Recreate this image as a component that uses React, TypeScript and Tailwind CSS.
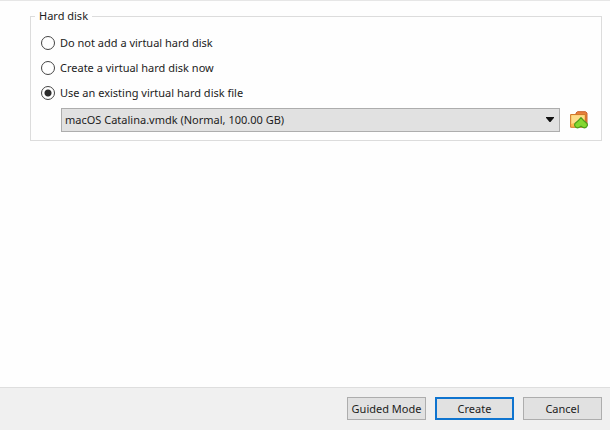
import { useState } from 'react';

type DiskMode = 'none' | 'create' | 'existing';

interface DiskOption {
    value: DiskMode;
    label: string;
}

const diskOptions: DiskOption[] = [
    { value: 'none', label: 'Do not add a virtual hard disk' },
    { value: 'create', label: 'Create a virtual hard disk now' },
    { value: 'existing', label: 'Use an existing virtual hard disk file' },
];

const diskFiles = ['macOS Catalina.vmdk (Normal, 100.00 GB)'];

function FolderUpIcon() {
    return (
        <svg viewBox="0 0 18 18" className="h-[18px] w-[18px]" aria-hidden="true">
            <path d="M6 4V2L7.5 .7h8L17 2v13H6z" fill="#e8803c" stroke="#c9622a" strokeWidth="1" />
            <path d="M.6 3.5h14.9v12.8H.6z" fill="#fbb94f" stroke="#d07a2c" strokeWidth="1" />
            <path d="M1.4 4.3h13v4L1.4 13z" fill="#fddc8a" />
            <path
                d="M11 6.6C12.6 8.6 14.6 10.6 16.7 12.2c1.200 1.300.7 3.400-.8 4.200-1.600.8-3.300.4-4.900-1.200-1.600 1.600-3.300 2-4.900 1.200-1.500-.8-2-2.900-.8-4.200C7.400 10.6 9.400 8.600 11 6.600z"
                fill="#84d830"
                stroke="#4a9e1c"
                strokeWidth="1.2"
                strokeLinejoin="round"
            />
        </svg>
    );
}

export default function App() {
    const [mode, setMode] = useState<DiskMode>('existing');
    const [file, setFile] = useState(diskFiles[0]);

    return (
        <form
            className="flex min-h-screen flex-col border-t border-[#e6e6e6] bg-[#fefefe] font-['Noto_Sans',sans-serif] text-[11px] leading-4 text-[#1c1c1c]"
            onSubmit={(e) => e.preventDefault()}
        >
            <main className="flex-1 pt-[7px] pr-2 pl-[30px]">
                <fieldset className="border border-[#dcdcdc] px-[10px] pb-2">
                    <legend className="-ml-1.5 px-1">Hard disk</legend>

                    <div className="flex flex-col gap-[9px] pt-[11px]">
                        {diskOptions.map((option) => (
                            <label key={option.value} className="flex items-center gap-[5px] self-start">
                                <input
                                    type="radio"
                                    name="disk"
                                    value={option.value}
                                    checked={mode === option.value}
                                    onChange={() => setMode(option.value)}
                                    className="h-[14px] w-[14px] appearance-none rounded-full border border-[#444] bg-white checked:bg-[radial-gradient(circle,#2b2b2b_3px,#fff_4px)]"
                                />
                                {option.label}
                            </label>
                        ))}
                    </div>

                    <div className="mt-[7px] flex items-center gap-[10px] pr-[3px] pl-5">
                        <div className="relative flex-1">
                            <select
                                aria-label="Virtual hard disk file"
                                value={file}
                                onChange={(e) => setFile(e.target.value)}
                                className="block h-6 w-full appearance-none border border-[#adadad] bg-[#e1e1e1] pr-6 pl-[3px]"
                            >
                                {diskFiles.map((name) => (
                                    <option key={name}>{name}</option>
                                ))}
                            </select>
                            <svg viewBox="0 0 8 5" className="pointer-events-none absolute top-[9px] right-[6px] h-[5px] w-2" aria-hidden="true">
                                <path d="M0 0h8v.8L4.5 5h-1L0 .8z" fill="#111" />
                            </svg>
                        </div>
                        <button type="button" aria-label="Choose a virtual hard disk file">
                            <FolderUpIcon />
                        </button>
                    </div>
                </fieldset>
            </main>

            <footer className="flex justify-end gap-[9px] border-t border-[#dedede] bg-[#f0f0f0] pt-[9px] pr-2 pb-[10px]">
                <button type="button" className="h-[23px] w-[79px] border border-[#adadad] bg-[#e1e1e1] whitespace-nowrap">
                    Guided Mode
                </button>
                <button type="submit" className="h-[23px] w-[79px] border-2 border-[#0f74cf] bg-[#e1e1e1]">
                    Create
                </button>
                <button type="button" className="h-[23px] w-[79px] border border-[#adadad] bg-[#e1e1e1]">
                    Cancel
                </button>
            </footer>
        </form>
    );
}
